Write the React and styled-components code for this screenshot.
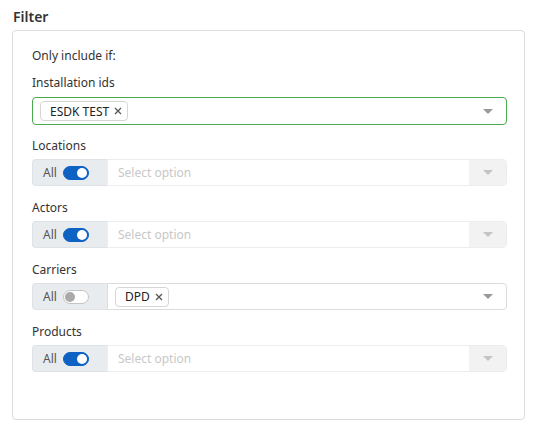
import styled, { createGlobalStyle } from "styled-components";

const Global = createGlobalStyle`
  html, body {
    margin: 0;
    padding: 0;
    background: #fff;
  }
  body {
    font-family: "Segoe UI", "Noto Sans", sans-serif;
    color: #333;
  }
`;

const Page = styled.div`
  width: 537px;
  height: 433px;
  box-sizing: border-box;
  padding: 7px 12px 0 12px;
`;

const Title = styled.h3`
  margin: 0 0 4px 1px;
  font-size: 14px;
  font-weight: 600;
  line-height: 19px;
  color: #333;
`;

const Card = styled.div`
  box-sizing: border-box;
  height: 390px;
  border: 1px solid #dcdcdc;
  border-radius: 4px;
  padding: 16px 17px 0 19px;
  display: flex;
  flex-direction: column;
`;

const Intro = styled.div`
  font-size: 12px;
  line-height: 18px;
  color: #333;
  margin-bottom: 9px;
`;

const Field = styled.div`
  display: flex;
  flex-direction: column;
  margin-bottom: ${(p) => (p.$first ? "12px" : "13px")};
`;

const Label = styled.label`
  font-size: 12px;
  line-height: 18px;
  color: #333;
  margin-bottom: ${(p) => (p.$first ? "5px" : "4px")};
`;

const Row = styled.div`
  display: flex;
  height: ${(p) => (p.$tall ? "28px" : "27px")};
`;

const AllBox = styled.div`
  box-sizing: border-box;
  width: 75px;
  flex: none;
  display: flex;
  align-items: center;
  gap: 6px;
  padding-left: 10px;
  background: #e9ecef;
  border: 1px solid #dee2e6;
  border-right: none;
  border-radius: 4px 0 0 4px;
  font-size: 12px;
  color: #555;
`;

const Switch = styled.span`
  position: relative;
  width: 26px;
  height: 14px;
  border-radius: 7px;
  box-sizing: border-box;
  background: ${(p) => (p.$on ? "#0d62c4" : "#fff")};
  border: 1px solid ${(p) => (p.$on ? "#0d62c4" : "#c4c4c4")};

  &::after {
    content: "";
    position: absolute;
    top: 1px;
    left: ${(p) => (p.$on ? "13px" : "1px")};
    width: 10px;
    height: 10px;
    border-radius: 50%;
    background: ${(p) => (p.$on ? "#fff" : "#aaa")};
  }
`;

const Select = styled.div`
  box-sizing: border-box;
  flex: 1;
  display: flex;
  align-items: center;
  min-width: 0;
  background: #fff;
  border: 1px solid
    ${(p) => (p.$focused ? "#4aa84e" : p.$disabled ? "#ededed" : "#dcdcdc")};
  border-radius: ${(p) => (p.$joined ? "0 4px 4px 0" : "4px")};
`;

const Values = styled.div`
  flex: 1;
  display: flex;
  align-items: center;
  gap: 4px;
  padding-left: 7px;
  font-size: 12px;
`;

const Placeholder = styled.span`
  color: #c8c8c8;
  padding-left: 3px;
`;

const Tag = styled.span`
  display: inline-flex;
  align-items: center;
  gap: 5px;
  height: 20px;
  box-sizing: border-box;
  padding: 0 5px 0 9px;
  border: 1px solid #d6d6d6;
  border-radius: 4px;
  font-size: 12px;
  font-weight: 400;
  color: #222;
`;

const CaretBox = styled.div`
  width: 37px;
  align-self: stretch;
  display: flex;
  align-items: center;
  justify-content: center;
  background: ${(p) => (p.$disabled ? "#f2f2f2" : "transparent")};
  border-radius: 0 3px 3px 0;
`;

const Remove = () => (
  <svg width="8" height="8" viewBox="0 0 8 8">
    <path d="M1 1 L7 7 M7 1 L1 7" stroke="#555" strokeWidth="1.3" />
  </svg>
);

const Caret = ({ light }) => (
  <svg width="10" height="5" viewBox="0 0 10 5">
    <path d="M0 0 L10 0 L5 5 Z" fill={light ? "#c4c4c4" : "#999"} />
  </svg>
);

function ToggleSelect({ label, on, tags }) {
  const disabled = on;
  return (
    <Field>
      <Label>{label}</Label>
      <Row>
        <AllBox>
          All
          <Switch $on={on} />
        </AllBox>
        <Select $joined $disabled={disabled}>
          <Values>
            {tags && tags.length ? (
              tags.map((t) => (
                <Tag key={t}>
                  {t}
                  <Remove />
                </Tag>
              ))
            ) : (
              <Placeholder>Select option</Placeholder>
            )}
          </Values>
          <CaretBox $disabled={disabled}>
            <Caret light={disabled} />
          </CaretBox>
        </Select>
      </Row>
    </Field>
  );
}

export default function App() {
  return (
    <>
      <Global />
      <Page>
        <Title>Filter</Title>
        <Card>
          <Intro>Only include if:</Intro>
          <Field $first>
            <Label $first>Installation ids</Label>
            <Row $tall>
              <Select $focused>
                <Values>
                  <Tag>
                    ESDK TEST
                    <Remove />
                  </Tag>
                </Values>
                <CaretBox>
                  <Caret />
                </CaretBox>
              </Select>
            </Row>
          </Field>
          <ToggleSelect label="Locations" on />
          <ToggleSelect label="Actors" on />
          <ToggleSelect label="Carriers" on={false} tags={["DPD"]} />
          <ToggleSelect label="Products" on />
        </Card>
      </Page>
    </>
  );
}
